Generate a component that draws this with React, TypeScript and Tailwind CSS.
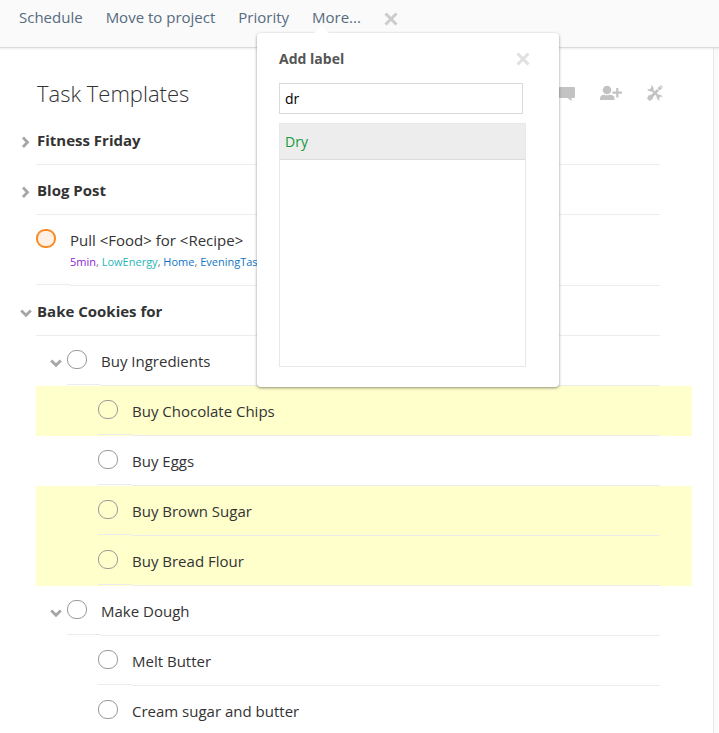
import React, { useState } from "react";

type Tag = { name: string; tone: string };
type Item = {
  id: string;
  title: string;
  level: 0 | 1 | 2;
  section?: boolean;
  open?: boolean;
  urgent?: boolean;
  marked?: boolean;
  tags?: Tag[];
};

const items: Item[] = [
  { id: "fitness", title: "Fitness Friday", level: 0, section: true },
  { id: "blog", title: "Blog Post", level: 0, section: true },
  {
    id: "recipe",
    title: "Pull <Food> for <Recipe>",
    level: 0,
    urgent: true,
    tags: [
      { name: "5min", tone: "text-[#8e24d8]" },
      { name: "LowEnergy", tone: "text-[#1fb5b8]" },
      { name: "Home", tone: "text-[#1275c4]" },
      { name: "EveningTask", tone: "text-[#1275c4]" },
    ],
  },
  { id: "bake", title: "Bake Cookies for", level: 0, section: true, open: true },
  { id: "ingredients", title: "Buy Ingredients", level: 1, open: true },
  { id: "chips", title: "Buy Chocolate Chips", level: 2, marked: true },
  { id: "eggs", title: "Buy Eggs", level: 2 },
  { id: "sugar", title: "Buy Brown Sugar", level: 2, marked: true },
  { id: "flour", title: "Buy Bread Flour", level: 2, marked: true },
  { id: "dough", title: "Make Dough", level: 1, open: true },
  { id: "butter", title: "Melt Butter", level: 2 },
  { id: "cream", title: "Cream sugar and butter", level: 2 },
];

function Chevron({ open }: { open?: boolean }) {
  return (
    <svg width="12" height="12" viewBox="0 0 12 12" fill="none" stroke="#a6a6a6" strokeWidth="2.8">
      <path d={open ? "M1.2 3.5 L6 8.3 L10.800 3.5" : "M3 1.5 L7.500 6.2 L3 11"} />
    </svg>
  );
}

function Toggle({ item }: { item: Item }) {
  return (
    <button
      type="button"
      aria-label={(item.open ? "Collapse " : "Expand ") + item.title}
      aria-expanded={!!item.open}
      className="mt-5 block h-3 w-3"
    >
      <Chevron open={item.open} />
    </button>
  );
}

function Cross({ color }: { color: string }) {
  return (
    <svg width="14" height="14" viewBox="0 0 14 14" fill="none" stroke={color} strokeWidth="3">
      <path d="M1.5 1.5 L12.5 12.5 M12.5 1.5 L1.5 12.5" />
    </svg>
  );
}

function Row({ item }: { item: Item }) {
  return (
    <li className="flex">
      <div className="w-4 shrink-0 pt-px">{item.section && <Toggle item={item} />}</div>
      <div className={`flex min-w-0 flex-1 items-start pr-8 ${item.marked ? "bg-[#ffffcc]" : ""}`}>
        {item.level === 1 && (
          <div className="w-[31px] shrink-0 pt-px pl-[14px]">
            <Toggle item={item} />
          </div>
        )}
        {item.level === 2 && <div className="w-[62px] shrink-0" />}
        {!item.section && (
          <div className="w-[34px] shrink-0 self-stretch pb-px">
            <div className="h-full border-b border-[#ececec] pt-[14px]">
              <input
                id={item.id}
                type="checkbox"
                className={`block h-[19px] w-5 appearance-none rounded-[9px] ${
                  item.urgent ? "border-2 border-[#f98a24] bg-[#fff0e6]" : "border border-[#999999]"
                }`}
              />
            </div>
          </div>
        )}
        <div
          className={`min-w-0 flex-1 border-b border-[#ececec] ${
            item.tags ? "h-[71px]" : "h-[50px]"
          } ${item.section ? "pl-px" : ""} pt-[15px]`}
        >
          {item.section ? (
            <h2 className="text-[15px] leading-5 font-bold text-[#333333]">{item.title}</h2>
          ) : (
            <label htmlFor={item.id} className="block text-[15px] leading-5 text-[#333333]">
              {item.title}
            </label>
          )}
          {item.tags && (
            <p className="text-[11px] leading-6 text-[#777777]">
              {item.tags.map((t, i) => (
                <React.Fragment key={t.name}>
                  {i > 0 && ", "}
                  <a href="#" className={t.tone}>
                    {t.name}
                  </a>
                </React.Fragment>
              ))}
            </p>
          )}
        </div>
      </div>
    </li>
  );
}

function LabelPopover() {
  const [query, setQuery] = useState("dr");
  return (
    <div className="absolute top-[33px] -left-[55px] z-10 h-[354px] w-[302px] rounded bg-white px-[22px] shadow-[0_1px_3px_rgba(0,0,0,0.45)]">
      <div className="absolute -top-[5px] left-[59px] h-[11px] w-[11px] rotate-45 bg-white" />
      <div className="flex items-center justify-between pt-4 pr-[7px]">
        <label htmlFor="label-query" className="text-[14px] leading-5 font-bold text-[#555555]">
          Add label
        </label>
        <button type="button" aria-label="Close label search">
          <Cross color="#e0e0e0" />
        </button>
      </div>
      <input
        id="label-query"
        type="text"
        value={query}
        onChange={(e) => setQuery(e.target.value)}
        className="mt-[14px] block h-[31px] w-[244px] border border-[#d9d9d9] px-[5px] text-[14px] text-black outline-none"
      />
      <ul className="mt-[9px] h-[244px] w-[247px] border border-[#e8e8e8]">
        <li className="border-b border-[#dcdcdc] bg-[#ededed]">
          <button type="button" className="block h-[35px] w-full px-[5px] text-left text-[14px] text-[#119a3c]">
            Dry
          </button>
        </li>
      </ul>
    </div>
  );
}

export default function App() {
  return (
    <div className="h-screen overflow-hidden bg-[#fafafa] font-['Open_Sans','Noto_Sans',sans-serif]">
      <header className="relative z-10 h-12 border-b border-[#d9d9d9] bg-[#fafafa] shadow-[0_1px_2px_rgba(0,0,0,0.08)]">
        <nav className="flex items-start gap-[23px] pl-[19px] text-[15px] text-[#566b80]">
          <button type="button" className="h-[34px]">Schedule</button>
          <button type="button" className="h-[34px]">Move to project</button>
          <button type="button" className="h-[34px]">Priority</button>
          <div className="relative">
            <button type="button" className="h-[34px]">More...</button>
            <LabelPopover />
          </div>
          <button type="button" aria-label="Clear selection" className="flex h-[38px] items-center">
            <Cross color="#cccccc" />
          </button>
        </nav>
      </header>
      <main className="mr-[5px] min-h-full border-r border-[#e8e8e8] bg-white pr-[21px] pl-5">
        <div className="flex h-[67px] items-start justify-between pt-[29px] pr-[29px] pl-[17px]">
          <h1 className="text-[22px] leading-8 font-light text-[#333333]">Task Templates</h1>
          <div className="flex items-center gap-[25px] pt-2">
            <button type="button" aria-label="Comments">
              <svg width="17" height="16" viewBox="0 0 17 16" fill="#c3c3c3">
                <path d="M2 2h14q1 0 1 1v9q0 1-1 1h-2.500v3l-4-3H2q-1 0-1-1V3q0-1 1-1z" />
              </svg>
            </button>
            <button type="button" aria-label="Share project">
              <svg width="22" height="16" viewBox="0 0 22 16" fill="#c3c3c3">
                <circle cx="7" cy="5" r="4.300" />
                <path d="M0 15v-1.500Q0 10 4.500 9.700Q7 11 9.500 9.700Q14.500 10 14.500 13.500V15zM12.500 6.500h3.700V3h2.200v3.500H22v2.300h-3.600v3.700h-2.200V8.800h-3.700z" />
              </svg>
            </button>
            <button type="button" aria-label="Project settings">
              <svg width="16" height="16" viewBox="0 0 16 16" fill="#c3c3c3">
                <path d="M4 .3Q7 1.500 6.500 5L11 9.500Q14.500 9 15.800 12L13.500 11.600 12 13.200 12.600 15.800Q9.300 14.500 9.600 11L5 6.500Q1.500 7 .2 4L2.700 4.300 4.300 2.800z" />
                <path d="M0 13.500L1.500 10.500 4.500 9.500 10 4 12 6 6.500 11.500 5.500 14.300 2.500 16z" />
                <path d="M10.500 3.300L12.800 1 15 3.200 12.700 5.500zM13.300 .5l.8-.5L16 1.900l-.5.8z" />
              </svg>
            </button>
          </div>
        </div>
        <ul>
          {items.map((item) => (
            <Row key={item.id} item={item} />
          ))}
        </ul>
      </main>
    </div>
  );
}
